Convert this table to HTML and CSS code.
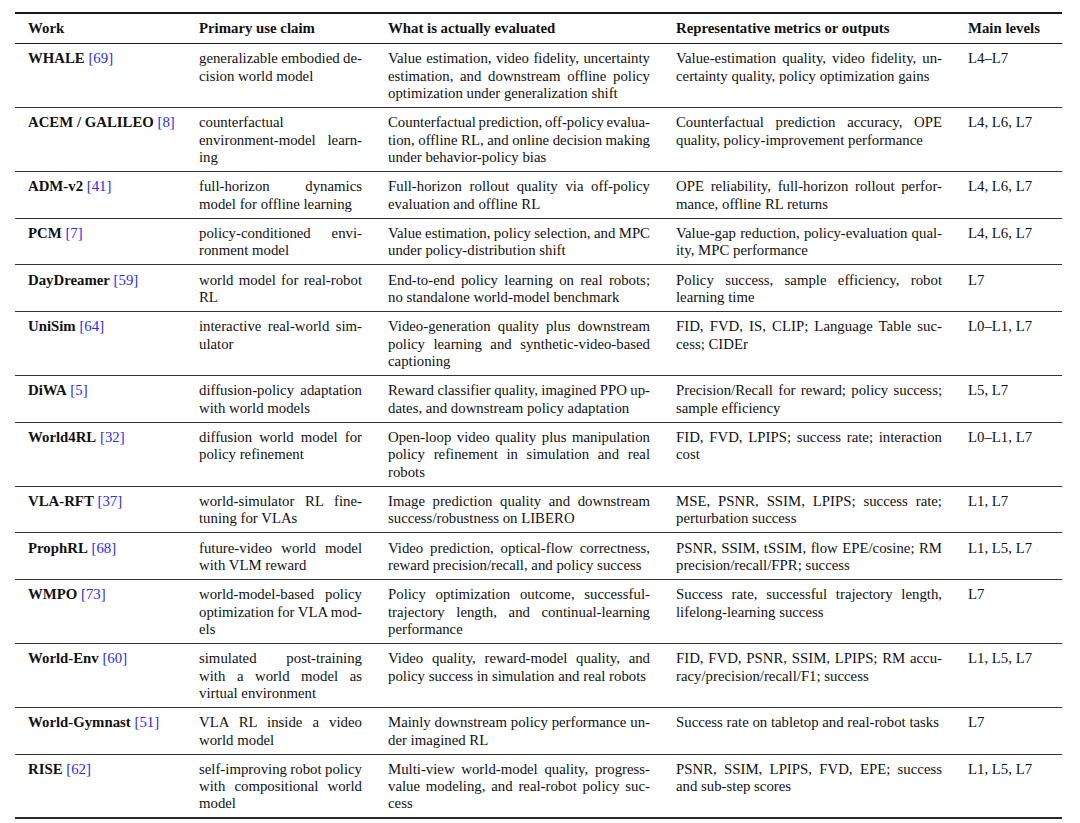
FILE: index.html
```html
<!DOCTYPE html>
<html lang="en">
<head>
<meta charset="utf-8">
<title>World model evaluation table</title>
<link rel="stylesheet" href="styles.css">
</head>
<body>
<table class="tbl">
  <colgroup>
    <col class="c-work">
    <col class="c-claim">
    <col class="c-eval">
    <col class="c-metric">
    <col class="c-level">
  </colgroup>
  <thead>
    <tr>
      <th>Work</th>
      <th>Primary use claim</th>
      <th>What is actually evaluated</th>
      <th>Representative metrics or outputs</th>
      <th>Main levels</th>
    </tr>
  </thead>
  <tbody>
    <tr>
      <td class="name"><b>WHALE</b> <a class="cite">[69]</a></td>
      <td><span class="ln j">generalizable embodied de-</span><span class="ln">cision world model</span></td>
      <td><span class="ln j">Value estimation, video fidelity, uncertainty</span><span class="ln j">estimation, and downstream offline policy</span><span class="ln">optimization under generalization shift</span></td>
      <td><span class="ln j">Value-estimation quality, video fidelity, un-</span><span class="ln">certainty quality, policy optimization gains</span></td>
      <td>L4–L7</td>
    </tr>
    <tr>
      <td class="name"><b>ACEM / GALILEO</b> <a class="cite">[8]</a></td>
      <td><span class="ln j">counterfactual</span><span class="ln j">environment-model learn-</span><span class="ln">ing</span></td>
      <td><span class="ln j">Counterfactual prediction, off-policy evalua-</span><span class="ln j">tion, offline RL, and online decision making</span><span class="ln">under behavior-policy bias</span></td>
      <td><span class="ln j">Counterfactual prediction accuracy, OPE</span><span class="ln">quality, policy-improvement performance</span></td>
      <td>L4, L6, L7</td>
    </tr>
    <tr>
      <td class="name"><b>ADM-v2</b> <a class="cite">[41]</a></td>
      <td><span class="ln j">full-horizon dynamics</span><span class="ln">model for offline learning</span></td>
      <td><span class="ln j">Full-horizon rollout quality via off-policy</span><span class="ln">evaluation and offline RL</span></td>
      <td><span class="ln j">OPE reliability, full-horizon rollout perfor-</span><span class="ln">mance, offline RL returns</span></td>
      <td>L4, L6, L7</td>
    </tr>
    <tr>
      <td class="name"><b>PCM</b> <a class="cite">[7]</a></td>
      <td><span class="ln j">policy-conditioned envi-</span><span class="ln">ronment model</span></td>
      <td><span class="ln j">Value estimation, policy selection, and MPC</span><span class="ln">under policy-distribution shift</span></td>
      <td><span class="ln j">Value-gap reduction, policy-evaluation qual-</span><span class="ln">ity, MPC performance</span></td>
      <td>L4, L6, L7</td>
    </tr>
    <tr>
      <td class="name"><b>DayDreamer</b> <a class="cite">[59]</a></td>
      <td><span class="ln j">world model for real-robot</span><span class="ln">RL</span></td>
      <td><span class="ln j">End-to-end policy learning on real robots;</span><span class="ln">no standalone world-model benchmark</span></td>
      <td><span class="ln j">Policy success, sample efficiency, robot</span><span class="ln">learning time</span></td>
      <td>L7</td>
    </tr>
    <tr>
      <td class="name"><b>UniSim</b> <a class="cite">[64]</a></td>
      <td><span class="ln j">interactive real-world sim-</span><span class="ln">ulator</span></td>
      <td><span class="ln j">Video-generation quality plus downstream</span><span class="ln j">policy learning and synthetic-video-based</span><span class="ln">captioning</span></td>
      <td><span class="ln j">FID, FVD, IS, CLIP; Language Table suc-</span><span class="ln">cess; CIDEr</span></td>
      <td>L0–L1, L7</td>
    </tr>
    <tr>
      <td class="name"><b>DiWA</b> <a class="cite">[5]</a></td>
      <td><span class="ln j">diffusion-policy adaptation</span><span class="ln">with world models</span></td>
      <td><span class="ln j">Reward classifier quality, imagined PPO up-</span><span class="ln">dates, and downstream policy adaptation</span></td>
      <td><span class="ln j">Precision/Recall for reward; policy success;</span><span class="ln">sample efficiency</span></td>
      <td>L5, L7</td>
    </tr>
    <tr>
      <td class="name"><b>World4RL</b> <a class="cite">[32]</a></td>
      <td><span class="ln j">diffusion world model for</span><span class="ln">policy refinement</span></td>
      <td><span class="ln j">Open-loop video quality plus manipulation</span><span class="ln j">policy refinement in simulation and real</span><span class="ln">robots</span></td>
      <td><span class="ln j">FID, FVD, LPIPS; success rate; interaction</span><span class="ln">cost</span></td>
      <td>L0–L1, L7</td>
    </tr>
    <tr>
      <td class="name"><b>VLA-RFT</b> <a class="cite">[37]</a></td>
      <td><span class="ln j">world-simulator RL fine-</span><span class="ln">tuning for VLAs</span></td>
      <td><span class="ln j">Image prediction quality and downstream</span><span class="ln">success/robustness on LIBERO</span></td>
      <td><span class="ln j">MSE, PSNR, SSIM, LPIPS; success rate;</span><span class="ln">perturbation success</span></td>
      <td>L1, L7</td>
    </tr>
    <tr>
      <td class="name"><b>ProphRL</b> <a class="cite">[68]</a></td>
      <td><span class="ln j">future-video world model</span><span class="ln">with VLM reward</span></td>
      <td><span class="ln j">Video prediction, optical-flow correctness,</span><span class="ln">reward precision/recall, and policy success</span></td>
      <td><span class="ln j">PSNR, SSIM, tSSIM, flow EPE/cosine; RM</span><span class="ln">precision/recall/FPR; success</span></td>
      <td>L1, L5, L7</td>
    </tr>
    <tr>
      <td class="name"><b>WMPO</b> <a class="cite">[73]</a></td>
      <td><span class="ln j">world-model-based policy</span><span class="ln j">optimization for VLA mod-</span><span class="ln">els</span></td>
      <td><span class="ln j">Policy optimization outcome, successful-</span><span class="ln j">trajectory length, and continual-learning</span><span class="ln">performance</span></td>
      <td><span class="ln j">Success rate, successful trajectory length,</span><span class="ln">lifelong-learning success</span></td>
      <td>L7</td>
    </tr>
    <tr>
      <td class="name"><b>World-Env</b> <a class="cite">[60]</a></td>
      <td><span class="ln j">simulated post-training</span><span class="ln j">with a world model as</span><span class="ln">virtual environment</span></td>
      <td><span class="ln j">Video quality, reward-model quality, and</span><span class="ln">policy success in simulation and real robots</span></td>
      <td><span class="ln j">FID, FVD, PSNR, SSIM, LPIPS; RM accu-</span><span class="ln">racy/precision/recall/F1; success</span></td>
      <td>L1, L5, L7</td>
    </tr>
    <tr>
      <td class="name"><b>World-Gymnast</b> <a class="cite">[51]</a></td>
      <td><span class="ln j">VLA RL inside a video</span><span class="ln">world model</span></td>
      <td><span class="ln j">Mainly downstream policy performance un-</span><span class="ln">der imagined RL</span></td>
      <td><span class="ln">Success rate on tabletop and real-robot tasks</span></td>
      <td>L7</td>
    </tr>
    <tr>
      <td class="name"><b>RISE</b> <a class="cite">[62]</a></td>
      <td><span class="ln j">self-improving robot policy</span><span class="ln j">with compositional world</span><span class="ln">model</span></td>
      <td><span class="ln j">Multi-view world-model quality, progress-</span><span class="ln j">value modeling, and real-robot policy suc-</span><span class="ln">cess</span></td>
      <td><span class="ln j">PSNR, SSIM, LPIPS, FVD, EPE; success</span><span class="ln">and sub-step scores</span></td>
      <td>L1, L5, L7</td>
    </tr>
  </tbody>
</table>
</body>
</html>
```

FILE: styles.css
```css
html, body {
  margin: 0;
  padding: 0;
  background: #ffffff;
}

body {
  padding: 12px 0 0 15px;
  font-family: "Liberation Serif", "Times New Roman", serif;
  font-size: 14.8px;
  line-height: 17.3px;
  color: #111111;
}

.tbl {
  width: 1047px;
  table-layout: fixed;
  border-collapse: collapse;
  border-top: 2px solid #1a1a1a;
  border-bottom: 2px solid #2a2a2a;
}

.c-work { width: 171px; }
.c-claim { width: 189px; }
.c-eval { width: 288px; }
.c-metric { width: 292px; }
.c-level { width: 107px; }

.tbl th {
  font-weight: bold;
  text-align: left;
  vertical-align: top;
  padding: 5.9px 13px 5.8px;
  border-bottom: 1px solid #1a1a1a;
  white-space: nowrap;
}

.tbl td {
  vertical-align: top;
  text-align: left;
  padding: 6.4px 13px 4.7px;
  border-top: 1px solid #333333;
}

.tbl td.name {
  white-space: nowrap;
}

.cite {
  color: #2a2af0;
  text-decoration: none;
}

.ln {
  display: block;
  text-align: left;
}

.ln.j {
  text-align: justify;
  text-align-last: justify;
  word-spacing: -1.5px;
}
```
